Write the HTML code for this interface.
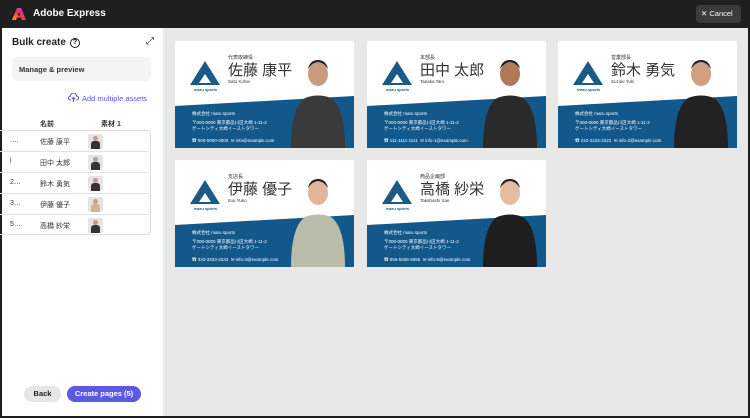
<!DOCTYPE html>
<html><head><meta charset="utf-8"><style>
*{box-sizing:border-box;margin:0;padding:0}
body{width:750px;height:418px;overflow:hidden;background:#1e1e1e;font-family:"Liberation Sans","Noto Sans CJK JP",sans-serif;position:relative}
.hdr{position:absolute;left:0;top:0;width:750px;height:28px;background:#1f1f1f;color:#fff}
.main{position:absolute;left:2px;top:28px;width:746px;height:388px;background:#e8e8e8}
.left{position:absolute;left:0;top:0;width:161px;height:388px;background:#fff}
.a{position:absolute;white-space:nowrap}
.card{position:absolute;width:179px;height:107px;background:#fff;overflow:hidden}
.card .t{position:absolute;white-space:nowrap}
.row{position:absolute;left:0;width:149px;height:21px;border-bottom:1px solid #e2e2e2;font-size:7px;color:#333}
.thumb{position:absolute;left:88px;top:3px;width:15px;height:15px;background:#e4e4e4;border-radius:2px;overflow:hidden}
.thumb i{position:absolute;left:5px;top:2px;width:5px;height:5px;border-radius:50%;background:#c99c80}
.thumb b{position:absolute;left:3px;top:7px;width:9px;height:9px;border-radius:3px 3px 0 0;background:#333}
</style></head><body>
<div class="hdr">
<svg class="a" style="left:12px;top:7px" width="14" height="14" viewBox="0 0 14 14"><defs><linearGradient id="g" x1="0" y1="1" x2="1" y2="0"><stop offset="0" stop-color="#ffb400"/><stop offset=".5" stop-color="#ff2d55"/><stop offset="1" stop-color="#7b5cff"/></linearGradient></defs><path d="M5 1h4l5 12h-4l-1-2.5H5L4 13H0z" fill="url(#g)"/><path d="M7 5l1.3 3.5H5.7z" fill="#1f1f1f"/></svg>
<div class="a" style="left:33px;top:8px;font-size:10px;font-weight:bold">Adobe Express</div>
<div class="a" style="left:696px;top:5px;width:45px;height:18px;background:#3b3b3b;border-radius:4px;font-size:7.5px;line-height:18px;padding-left:5px">✕ Cancel</div>
</div>
<div class="main">
<div class="left">
<div class="a" style="left:10px;top:9px;font-size:10px;font-weight:bold;color:#222">Bulk create</div>
<div class="a" style="left:68px;top:10px;width:10px;height:10px;border:1.2px solid #222;border-radius:50%;font-size:7px;text-align:center;line-height:8px;font-weight:bold">?</div>
<div class="a" style="left:144px;top:8px;font-size:10px;color:#222">⤢</div>
<div class="a" style="left:10px;top:29px;width:139px;height:24px;background:#f4f4f4;border-radius:6px;font-size:7.5px;font-weight:bold;color:#333;padding:8px 0 0 7px">Manage &amp; preview</div>
<svg class="a" style="left:66px;top:65px" width="11" height="10" viewBox="0 0 11 10"><path d="M3 7H2.5a2 2 0 0 1 0-4A3 3 0 0 1 8.5 3a2 2 0 0 1 0 4H8M5.5 9V4.5M3.8 6l1.7-1.7L7.2 6" fill="none" stroke="#5258e4" stroke-width="1"/></svg>
<div class="a" style="left:80px;top:66px;font-size:7.5px;color:#5258e4">Add multiple assets</div>
<div class="a" style="left:38px;top:91px;font-size:7px;color:#333;font-weight:bold">名前</div>
<div class="a" style="left:99px;top:91px;font-size:7px;color:#333;font-weight:bold">素材 1</div>
<div class="a" style="left:-2px;top:102px;width:151px;height:105px;border:1px solid #ddd;border-left:none;border-radius:0 4px 4px 0">
<div class="row" style="top:0"><span class="a" style="left:10px;top:6px">.…</span><span class="a" style="left:40px;top:6px">佐藤 康平</span><div class="thumb"><i></i><b></b></div></div>
<div class="row" style="top:21px"><span class="a" style="left:10px;top:6px">l</span><span class="a" style="left:40px;top:6px">田中 太郎</span><div class="thumb"><i></i><b></b></div></div>
<div class="row" style="top:42px"><span class="a" style="left:10px;top:6px">2…</span><span class="a" style="left:40px;top:6px">鈴木 勇気</span><div class="thumb"><i></i><b></b></div></div>
<div class="row" style="top:63px"><span class="a" style="left:10px;top:6px">3…</span><span class="a" style="left:40px;top:6px">伊藤 優子</span><div class="thumb"><i></i><b style="background:#c8b89a"></b></div></div>
<div class="row" style="top:84px;border:none"><span class="a" style="left:10px;top:6px">5…</span><span class="a" style="left:40px;top:6px">高橋 紗栄</span><div class="thumb"><i></i><b></b></div></div>
</div>
<div class="a" style="left:22px;top:358px;width:37px;height:16px;background:#e6e6e6;border-radius:8px;font-size:7.5px;font-weight:bold;color:#222;text-align:center;line-height:16px">Back</div>
<div class="a" style="left:65px;top:358px;width:74px;height:16px;background:#5a5ae0;border-radius:8px;font-size:7.5px;font-weight:bold;color:#fff;text-align:center;line-height:16px">Create pages (5)</div>
</div>
</div>

<div id="cards"></div>
<script>
const data=[
[175,41,"代表取締役","佐藤 康平","Sato Kohei","000-0000-0000","info@example.com","#3a3a3a","#c99c80"],
[367,41,"本部長","田中 太郎","Tanaka Taro","111-1111-1111","info-1@example.com","#2a2a2a","#b07a5a"],
[558,41,"営業部長","鈴木 勇気","Suzuki Yuki","222-2222-2222","info-2@example.com","#222","#d0a080"],
[175,160,"支店長","伊藤 優子","Itou Yuko","333-3333-3333","info-3@example.com","#b8bca8","#e0b59a"],
[367,160,"商品企画部","高橋 紗栄","Takahashi Sae","555-5555-5555","info-5@example.com","#1e1e1e","#e4bca0"]];
let h="";
for(const d of data){
h+=`<div class="card" style="left:${d[0]}px;top:${d[1]}px">
<svg style="position:absolute;left:0;top:0" width="179" height="107"><path d="M0 65L179 55V107H0z" fill="#13588a"/>
<path d="M30 20L45 44H15z" fill="#1a5a88"/><path d="M30 33L36 42H24z" fill="#fff"/>
<ellipse cx="143" cy="33" rx="10" ry="12" fill="${d[8]}"/><path d="M133 28q10-14 20 0q-2-9-10-9q-8 0-10 9z" fill="#222"/>
<path d="M116 107q0-40 14-50q13-5 26 0q14 10 14 50z" fill="${d[7]}"/></svg>
<div class="t" style="left:53px;top:13px;font-size:5px;color:#333">${d[2]}</div>
<div class="t" style="left:53px;top:18px;font-size:15px;color:#333">${d[3]}</div>
<div class="t" style="left:53px;top:38px;font-size:4.5px;color:#333">${d[4]}</div>
<div class="t" style="left:19px;top:46px;font-size:4px;color:#1a5a88;font-weight:bold">maru sports</div>
<div class="t" style="left:17px;top:70px;font-size:4.5px;color:#fff">株式会社 maru sports</div>
<div class="t" style="left:17px;top:79px;font-size:4.5px;color:#fff;line-height:6px">〒000-0000 東京都品川区大崎 1-11-2<br>ゲートシティ大崎イーストタワー</div>
<div class="t" style="left:17px;top:97px;font-size:4.5px;color:#fff">☎ ${d[5]} &nbsp;✉ ${d[6]}</div>
</div>`}
document.getElementById("cards").innerHTML=h;
</script>
</body></html>
